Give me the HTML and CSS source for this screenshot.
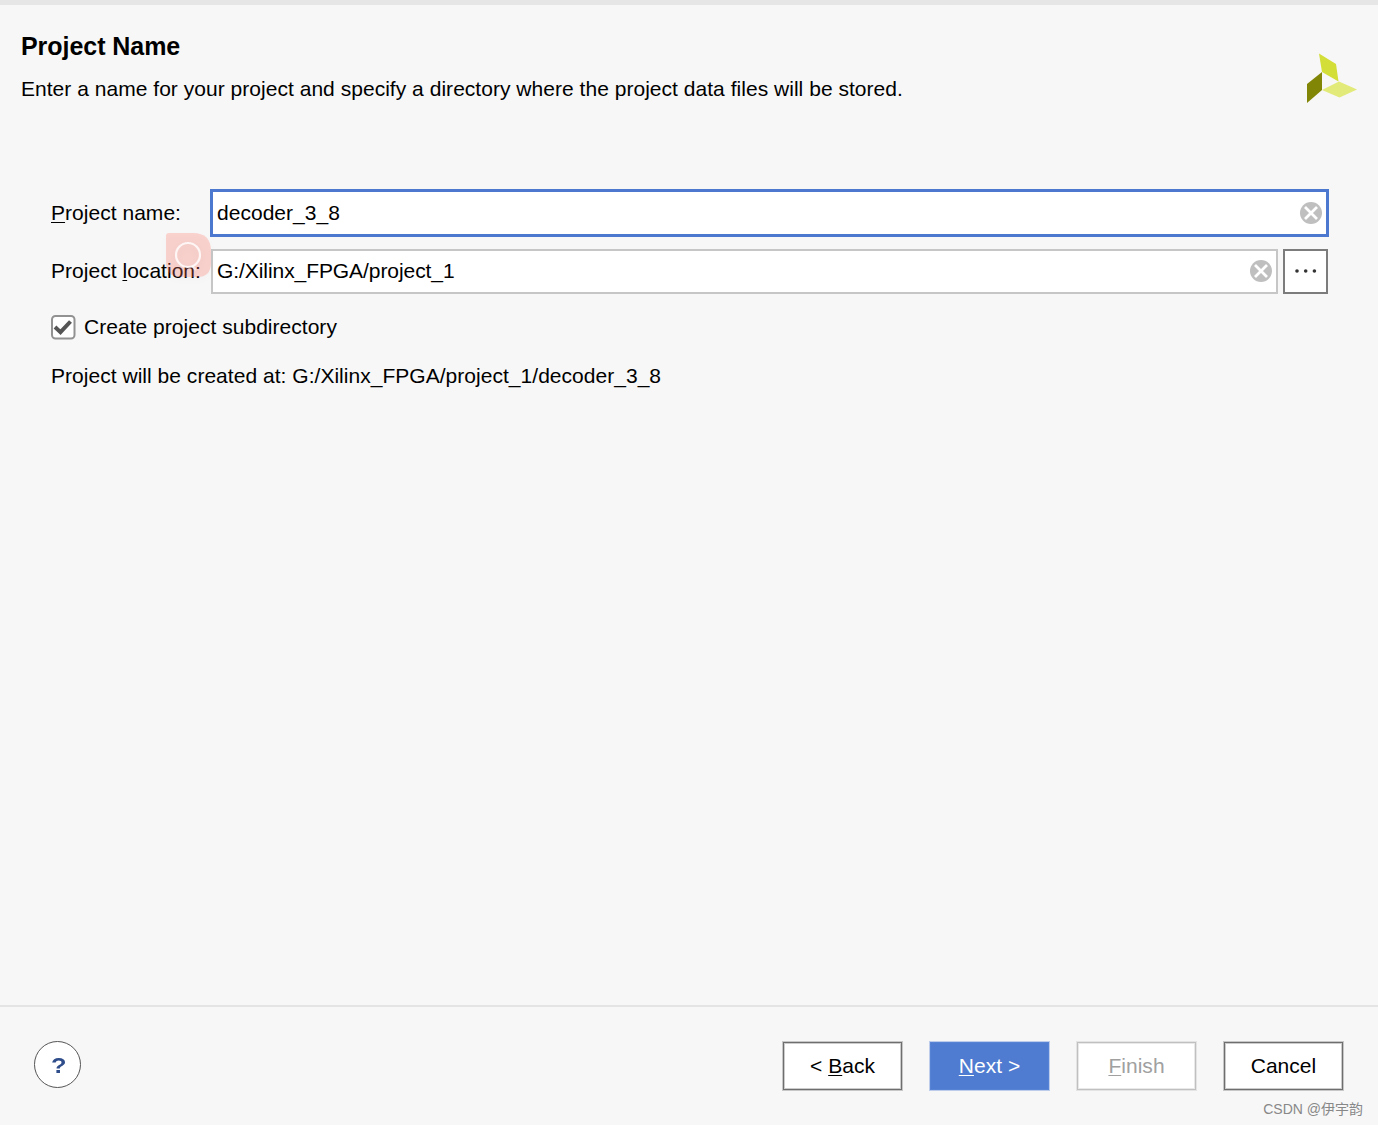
FILE: index.html
```
<!DOCTYPE html>
<html>
<head lang="en">
    <meta charset="UTF-8">
    <title>New Project</title>
    <link rel="stylesheet" href="styles.css">
</head>
<body>
<div class="wizard">
    <div class="header">
        <div class="intro">
            <h1>Project Name</h1>
            <p>Enter a name for your project and specify a directory where the project data files will be stored.</p>
        </div>
        <svg class="logo" width="52" height="52" viewBox="0 0 52 52">
            <path fill="#d3de38" d="M14 0.5L31 11L33.5 28.5L17 19Z"/>
            <path fill="#828607" d="M2 31L17 19V37L2 50Z"/>
            <path fill="#e2ea79" d="M17 37L34 28.5L52 36.5L34.5 44.5Z"/>
        </svg>
    </div>
    <div class="form">
        <div class="row">
            <label class="label"><u>P</u>roject name:</label>
            <div class="field active">
                <span class="value">decoder_3_8</span>
                <svg class="clear" width="22" height="22" viewBox="0 0 22 22">
                    <circle cx="11" cy="11" r="11" fill="#bfbfbf"/>
                    <path d="M5 5L17 17M17 5L5 17" stroke="#fff" stroke-width="2.8"/>
                </svg>
            </div>
        </div>
        <div class="row second">
            <label class="label">Project <u>l</u>ocation:</label>
            <div class="field">
                <span class="value path">G:/Xilinx_FPGA/project_1</span>
                <svg class="clear" width="22" height="22" viewBox="0 0 22 22">
                    <circle cx="11" cy="11" r="11" fill="#bfbfbf"/>
                    <path d="M5 5L17 17M17 5L5 17" stroke="#fff" stroke-width="2.8"/>
                </svg>
            </div>
            <div class="browse">
                <svg width="22" height="4" viewBox="0 0 22 4">
                    <circle cx="2" cy="2" r="1.8"/>
                    <circle cx="10.7" cy="2" r="1.8"/>
                    <circle cx="19.4" cy="2" r="1.8"/>
                </svg>
            </div>
            <svg class="floating" width="60" height="60" viewBox="0 0 60 60">
                <path class="tile" d="M8 5H32Q50 5 50 23V35Q50 49 36 49H20Q5 49 5 34V8Q5 5 8 5Z"/>
                <circle cx="27" cy="27" r="12" fill="none" stroke="#fff" stroke-opacity=".8" stroke-width="2.2"/>
                <path d="M31 38L35 42" stroke="#fff" stroke-opacity=".5" stroke-width="2"/>
            </svg>
        </div>
        <div class="check">
            <svg width="26" height="26" viewBox="0 0 26 26">
                <rect x="2" y="2" width="22.5" height="22.5" rx="3.5" fill="#fff" stroke="#929292" stroke-width="2"/>
                <path d="M5 13L10.5 18.2L20.5 7.5" fill="none" stroke="#555" stroke-width="4"/>
            </svg>
            <span>Create project subdirectory</span>
        </div>
        <p class="result">Project will be created at: G:/Xilinx_FPGA/project_1/decoder_3_8</p>
    </div>
    <div class="footer">
        <div class="help"><span>?</span></div>
        <div class="buttons">
            <div class="btn">&lt; <u>B</u>ack</div>
            <div class="btn next"><u>N</u>ext &gt;</div>
            <div class="btn disabled"><u>F</u>inish</div>
            <div class="btn">Cancel</div>
        </div>
    </div>
</div>
<div class="watermark">CSDN @伊宇韵</div>
</body>
</html>
```
FILE: styles.css
```
* {
    margin: 0;
    padding: 0;
    box-sizing: border-box;
}

body {
    font-family: "Liberation Sans", "Noto Sans CJK SC", sans-serif;
    font-size: 21px;
    line-height: 24px;
    letter-spacing: 0.03px;
    color: #000;
    background-color: #f7f7f7;
}

u {
    text-decoration-thickness: 1px;
    text-underline-offset: 2px;
    text-decoration-skip-ink: none;
}

.wizard {
    display: flex;
    flex-direction: column;
    height: 1125px;
    border-top: 5px solid #e6e6e6;
}

.header {
    display: flex;
    justify-content: space-between;
    height: 184px;
    padding: 26px 21px 0;
}

.header h1 {
    font-size: 25px;
    line-height: 30px;
    letter-spacing: -0.05px;
}

.header p {
    margin-top: 16px;
}

.logo {
    margin-top: 22px;
}

.form {
    flex: 1;
    padding: 0 49px 0 51px;
}

.row {
    display: flex;
    align-items: center;
    height: 48px;
}

.second {
    position: relative;
    height: 46px;
    margin-top: 11px;
    padding-right: 1px;
}

.label {
    width: 159px;
    white-space: nowrap;
}

.field {
    display: flex;
    flex: 1;
    align-items: center;
    justify-content: space-between;
    height: 45px;
    margin-left: 1px;
    padding: 0 4px;
    border: 2px solid #c6c6c6;
    background-color: #fff;
}

.path {
    letter-spacing: -0.07px;
}

.active {
    height: 48px;
    margin-left: 0;
    border: 3px solid #4c79cf;
}

.browse {
    display: flex;
    align-items: center;
    justify-content: center;
    width: 45px;
    height: 45px;
    margin-left: 5px;
    border: 2px solid #7c7c7c;
    background-color: #fff;
    fill: #333;
}

/* assistant bubble over the label */
.floating {
    position: absolute;
    left: 110px;
    top: -20px;
    filter: drop-shadow(0 3px 3px rgba(0, 0, 0, .06));
}

.tile {
    fill: #ff7466;
    fill-opacity: .28;
}

.check {
    display: flex;
    align-items: center;
    gap: 8px;
    height: 26px;
    margin: 20px 0 0 -1px;
}

.result {
    margin-top: 24px;
}

.footer {
    display: flex;
    justify-content: space-between;
    height: 120px;
    padding: 34px 35px 0 34px;
    border-top: 2px solid #e4e4e4;
}

.help {
    width: 47px;
    height: 47px;
    border: 1px solid #555;
    border-radius: 50%;
    background-color: #fff;
    color: #2f4d8b;
    font-size: 22px;
    font-weight: bold;
    line-height: 48px;
    text-align: center;
}

.help span {
    display: inline-block;
    margin-left: 2px;
    transform: scaleX(1.15);
}

.buttons {
    display: flex;
    gap: 28px;
    padding-top: 1px;
}

.btn {
    width: 119px;
    height: 48px;
    border: 1px solid #6e6e6e;
    box-shadow: 0 0 0 1px rgba(110, 110, 110, .35), inset 0 0 0 1px rgba(110, 110, 110, .35);
    background-color: #fff;
    line-height: 46px;
    text-align: center;
}

.next {
    border-color: #5783d5;
    box-shadow: 0 0 0 1px rgba(79, 123, 208, .35);
    background-color: #4f7bd0;
    color: #fff;
}

.disabled {
    border-color: #c0c0c0;
    box-shadow: 0 0 0 1px rgba(192, 192, 192, .35), inset 0 0 0 1px rgba(192, 192, 192, .35);
    color: #a0a0a0;
}

.watermark {
    position: absolute;
    right: 15px;
    bottom: 6px;
    color: #888;
    font-size: 14px;
    line-height: 20px;
    letter-spacing: 0;
}
```
